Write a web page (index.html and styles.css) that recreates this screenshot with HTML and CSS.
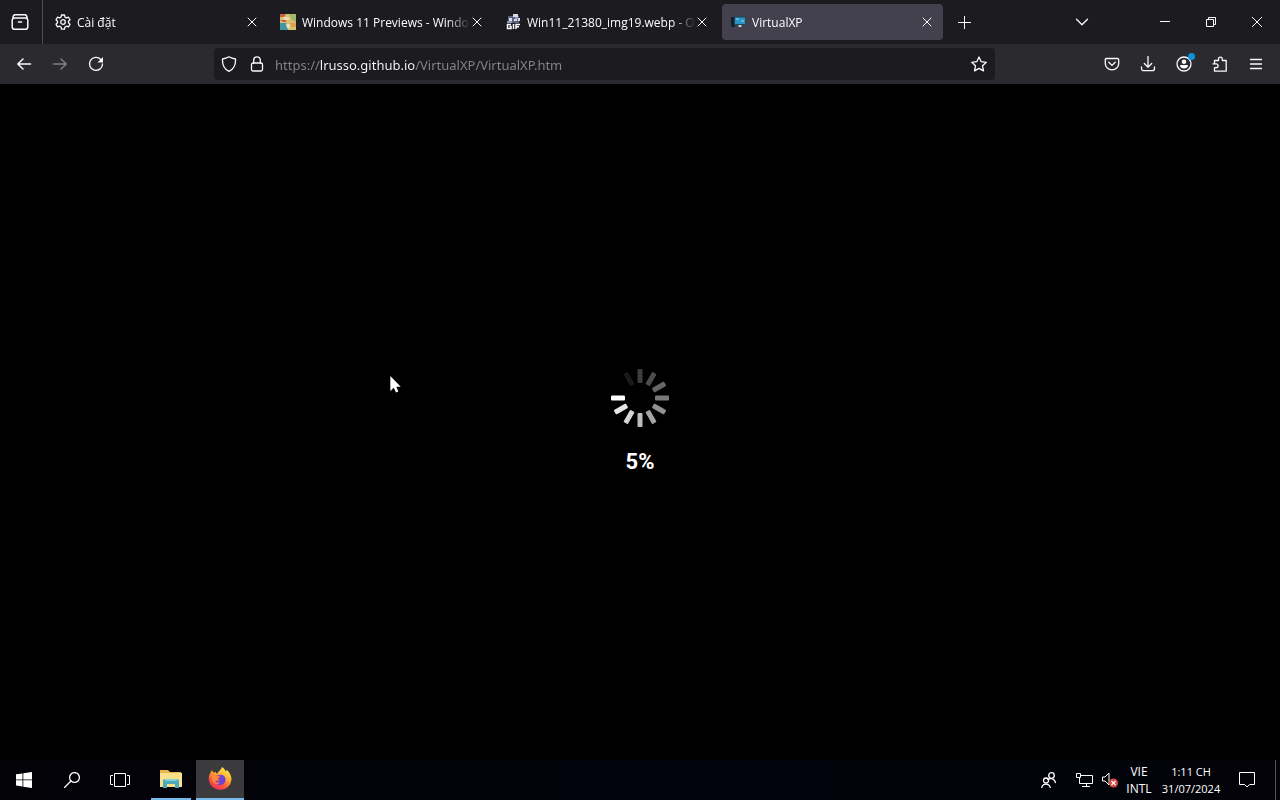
FILE: index.html
```html
<!DOCTYPE html>
<html lang="vi">
<head>
<meta charset="utf-8">
<meta name="viewport" content="width=device-width, initial-scale=1">
<title>VirtualXP</title>
<link rel="stylesheet" href="styles.css">
</head>
<body>
<header class="browser">
  <div class="tab-strip">
    <button class="view-button" aria-label="Firefox View">
      <svg class="icon" width="18" height="18" viewBox="0 0 18 18"><path d="M4 1.800h10M3.500 5h11a2.300 2.300 0 0 1 2.300 2.300v6.400a2.600 2.600 0 0 1-2.600 2.600H3.800a2.600 2.600 0 0 1-2.600-2.600V7.300A2.300 2.300 0 0 1 3.500 5zM1.800 5.400C2 3.500 2.500 1.800 4 1.800M16.200 5.400C16 3.500 15.500 1.800 14 1.800M7.500 9h3"/></svg>
    </button>
    <nav class="tabs" aria-label="Tabs">
      <div class="tab">
        <svg class="icon thin" width="16" height="16" viewBox="0 0 16 16"><path d="M6.500 1h3l.5 2.100 1.400.8 2.100-.7 1.500 2.600-1.500 1.500v1.500L15 10.300l-1.500 2.600-2.100-.7-1.400.8-.5 2.100h-3L6 13l-1.400-.8-2.100.7L1 10.300l1.500-1.500V7.300L1 5.800l1.500-2.600 2.100.7L6 3.100z"/><circle cx="8" cy="8" r="2.300"/></svg>
        <a class="tab-title" href="#">Cài đặt</a>
        <button class="tab-close" aria-label="Close tab"><svg class="icon hair" width="10" height="10" viewBox="0 0 10 10"><path d="M1 1l8 8M9 1L1 9"/></svg></button>
      </div>
      <div class="tab">
        <svg width="16" height="16" viewBox="0 0 16 16"><path fill="#d9bf74" d="M0 0h16v16H0z"/><path fill="#c0604a" d="M0 0h6l-2 3H0zM0 6h6v2H3z"/><path fill="#9bb968" d="M9 0h7v8l-4-2z"/><path fill="#f1d8ae" d="M3 3h6v3H4z"/><path fill="#4397a0" d="M0 9h6l2 7H0z"/><path fill="#dfa055" d="M10 9h6v4h-5z"/><path fill="#e9dfb2" d="M6 10h4v4H7z"/></svg>
        <a class="tab-title" href="#">Windows 11 Previews - Windo</a>
        <button class="tab-close" aria-label="Close tab"><svg class="icon hair" width="10" height="10" viewBox="0 0 10 10"><path d="M1 1l8 8M9 1L1 9"/></svg></button>
      </div>
      <div class="tab">
        <svg width="16" height="16" viewBox="0 0 16 16"><path fill="#59617b" d="M3 2h11v7H3z"/><path fill="#d9dce8" d="M8 0h5v3H8zM4 4h3v3H4zM9 5h3v2H9zM13 4h2v3h-2z"/><path fill="#8c99be" d="M2 7h5v2H2zM10 3h3v2h-3z"/><path fill="none" stroke="#fff" stroke-width="1.500" d="M6 10.500H2.500v4H6v-2H4.500M8.500 10v5M11 15v-4.500h4M11 12.700h3"/></svg>
        <a class="tab-title" href="#">Win11_21380_img19.webp - On</a>
        <button class="tab-close" aria-label="Close tab"><svg class="icon hair" width="10" height="10" viewBox="0 0 10 10"><path d="M1 1l8 8M9 1L1 9"/></svg></button>
      </div>
      <div class="tab active">
        <svg width="16" height="16" viewBox="0 0 16 16"><path fill="#15202b" d="M1 3h4v10H1z"/><path fill="#2a93c6" stroke="#24445a" d="M4.500 3h11v7.500h-11z"/><path fill="#59b8dd" d="M6 4h3v2H6zM11 6h3v2h-3z"/><path fill="#b8d5df" d="M8.500 11h3v2h-3z"/></svg>
        <a class="tab-title" href="#">VirtualXP</a>
        <button class="tab-close" aria-label="Close tab"><svg class="icon hair" width="10" height="10" viewBox="0 0 10 10"><path d="M1 1l8 8M9 1L1 9"/></svg></button>
      </div>
    </nav>
    <button class="new-tab" aria-label="New tab"><svg class="icon crisp" width="13" height="13" viewBox="0 0 13 13"><path d="M6.500 0v13M0 6.500h13"/></svg></button>
    <button class="list-tabs" aria-label="List all tabs"><svg class="icon thin" width="14" height="8" viewBox="0 0 14 8"><path d="M1.500 1.200L7 6.700l5.500-5.500"/></svg></button>
    <div class="window-controls">
      <button aria-label="Minimize"><svg class="icon crisp" width="10" height="10" viewBox="0 0 10 10"><path d="M0 4.500h10"/></svg></button>
      <button aria-label="Restore"><svg class="icon crisp" width="10" height="10" viewBox="0 0 10 10"><path d="M.5 2.500h7v7h-7zM2.500 2.500v-2h7v7h-2"/></svg></button>
      <button aria-label="Close"><svg class="icon hair" width="10" height="10" viewBox="0 0 10 10"><path d="M0 0l10 10M10 0L0 10"/></svg></button>
    </div>
  </div>
  <div class="toolbar">
    <button aria-label="Back"><svg class="icon" width="16" height="16" viewBox="0 0 16 16"><path d="M14.500 8H1.800M7 3L1.800 8 7 13"/></svg></button>
    <button aria-label="Forward" disabled><svg class="icon" width="16" height="16" viewBox="0 0 16 16"><path d="M1.500 8h12.700M9 3l5.200 5L9 13"/></svg></button>
    <button aria-label="Reload"><svg class="icon thin" width="16" height="16" viewBox="0 0 16 16"><path d="M12.800 3.500A6.500 6.500 0 1 0 14.500 8"/><path class="solid" d="M15 1v5.500H9.500z"/></svg></button>
    <form class="url-bar">
      <svg class="icon thin" width="16" height="16" viewBox="0 0 16 16"><path d="M8 .8c2 1.200 4.300 1.900 6.500 2.200.3 5.500-1.500 10-6.500 12.300C3 13 1.200 8.500 1.500 3 3.700 2.700 6 2 8 .8z"/></svg>
      <svg class="icon thin" width="16" height="16" viewBox="0 0 16 16"><rect x="2.500" y="7" width="11" height="8" rx="1.500"/><path d="M4.700 7V4.200a3.300 3.300 0 0 1 6.600 0V7"/></svg>
      <input class="url" type="text" aria-label="Address" value="https://lrusso.github.io/VirtualXP/VirtualXP.htm">
      <button type="button" aria-label="Bookmark this page"><svg class="icon thin" width="16" height="16" viewBox="0 0 16 16"><path d="M8 1l2.200 4.700 5.100.6-3.800 3.500 1 5.100L8 12.400l-4.500 2.500 1-5.100L.7 6.300l5.100-.6z"/></svg></button>
    </form>
    <button aria-label="Save to Pocket"><svg class="icon thin" width="16" height="16" viewBox="0 0 16 16"><path d="M2.500 2.500h11q1.200 0 1.200 1.200v4a6.700 6.200 0 0 1-13.400 0v-4q0-1.200 1.200-1.200zM4.800 6.300L8 9.400l3.200-3.100"/></svg></button>
    <button aria-label="Downloads"><svg class="icon thin" width="16" height="16" viewBox="0 0 16 16"><path d="M8 .5v10.500M4.300 7.500L8 11.200l3.700-3.700M1.500 11v1.500a2.200 2.200 0 0 0 2.200 2.200h8.600a2.200 2.200 0 0 0 2.200-2.200V11"/></svg></button>
    <button class="account" aria-label="Account"><svg class="icon thin" width="16" height="16" viewBox="0 0 16 16"><circle cx="8" cy="8" r="7"/><circle class="solid" cx="8" cy="5.800" r="2.300"/><path class="solid" d="M4 9h8a4 3.500 0 0 1-8 0z"/></svg></button>
    <button aria-label="Extensions"><svg class="icon thin" width="16" height="16" viewBox="0 0 16 16"><path d="M2.500 7.500V4.500h4V3a1.900 1.900 0 0 1 3.800 0v1.500h3.900v10.700H2.500v-3.500h1.700a1.900 1.900 0 0 0 0-3.800H1"/></svg></button>
    <button aria-label="Menu"><svg class="icon thin" width="14" height="12" viewBox="0 0 14 12"><path d="M1.500 1.500h11M1.500 6h11M1.500 10.500h11"/></svg></button>
  </div>
</header>

<main class="page">
  <div class="loader">
    <svg width="60" height="60" viewBox="0 0 60 60" aria-hidden="true">
      <defs><rect id="spoke" x="1" y="27.500" width="14" height="5" rx="1"/></defs>
      <g fill="#fff">
        <use href="#spoke"/>
        <use href="#spoke" transform="rotate(-30 30 30)" opacity=".9"/>
        <use href="#spoke" transform="rotate(-60 30 30)" opacity=".84"/>
        <use href="#spoke" transform="rotate(-90 30 30)" opacity=".74"/>
        <use href="#spoke" transform="rotate(-120 30 30)" opacity=".65"/>
        <use href="#spoke" transform="rotate(-150 30 30)" opacity=".57"/>
        <use href="#spoke" transform="rotate(180 30 30)" opacity=".48"/>
        <use href="#spoke" transform="rotate(150 30 30)" opacity=".4"/>
        <use href="#spoke" transform="rotate(120 30 30)" opacity=".3"/>
        <use href="#spoke" transform="rotate(90 30 30)" opacity=".24"/>
        <use href="#spoke" transform="rotate(60 30 30)" opacity=".1"/>
      </g>
    </svg>
    <div class="percent">5%</div>
  </div>
</main>

<footer class="taskbar">
  <button class="task" aria-label="Start"><svg width="16" height="16" viewBox="0 0 16 16"><path fill="#fff" d="M0 2.300l6.500-.9v6.100H0zM7.300 1.300L16 0v7.500H7.300zM0 8.300h6.500v6.200L0 13.600zM7.300 8.300H16V16l-8.700-1.300z"/></svg></button>
  <button class="task" aria-label="Search"><svg class="icon thin" width="16" height="16" viewBox="0 0 16 16"><circle cx="10.500" cy="5.500" r="4.900"/><path d="M7 9L.5 15.500"/></svg></button>
  <button class="task" aria-label="Task view"><svg class="icon crisp" width="20" height="14" viewBox="0 0 20 14"><path d="M4.500.5h11v13h-11zM3 2.500H.5v9H3M17 2.500h2.500v9H17"/></svg></button>
  <button class="task explorer" aria-label="File Explorer"><svg width="22" height="18" viewBox="0 0 22 18"><path fill="#e8b84c" d="M0 0h8l2 2h11v5H0z"/><path fill="#f9e08d" d="M0 3h22v14H0z"/><path fill="#4ca9bc" d="M3 18v-7q0-2 2-2h12q2 0 2 2v7h-4v-4H7v4z"/><path fill="#87d0d1" d="M5 9h12v2H5z"/></svg></button>
  <button class="task running" aria-label="Firefox"><svg width="24" height="24" viewBox="0 0 24 24">
    <defs><linearGradient id="flame" x1=".8" y1="0" x2=".25" y2="1"><stop offset="0" stop-color="#fff04f"/><stop offset=".4" stop-color="#ffab32"/><stop offset=".7" stop-color="#ff5639"/><stop offset="1" stop-color="#e62865"/></linearGradient></defs>
    <path fill="url(#flame)" d="M2.600 5.400L4 3l1.200 2.600L7.600 5 9 7c1.500-3 4-3.800 5-7 2 1.200 3 2.500 3.500 4.200L19 3c2.700 2.600 4.500 5.800 4.500 9.500A11.400 11.400 0 0 1 .8 12.800C.5 10 1.400 7.400 2.600 5.400z"/>
    <path fill="#7541d5" d="M8 8.500l4-.8c3.700 0 5.700 2 5.500 5.300-.2 3.400-2.800 5-5.500 5s-5-2-5-4.500c2 .8 4 .7 5-.8-2-.5-4-.4-5.500-2z"/>
    <path fill="#ff873a" d="M4 8c1.700-1 3.500-.7 4.800.5l3.200.6c-.2 1.400-1.700 1.600-2 2.900-.4 1.400-2.300 1-2.800 2 .8 2 3.400 1.800 5 1.200-2.200 3.400-8 1.600-8.200-3.200z"/>
  </svg></button>
  <div class="tray">
    <button class="people" aria-label="People"><svg class="icon thin" width="16" height="16" viewBox="0 0 16 16"><circle cx="10.500" cy="3.500" r="2.800"/><circle cx="5" cy="8.500" r="2.500"/><path d="M.8 15.500a4.300 4.300 0 0 1 8.400 0M7 7.500c3-2 6.500-.7 7.500 3"/></svg></button>
    <button class="network" aria-label="Network"><svg class="icon crisp" width="17" height="14" viewBox="0 0 17 14"><path d="M5 2.500h11.500v8H3.500V5M.5.500h4v4h-4zM6 13.500h8M10.500 10.500v3"/></svg></button>
    <button class="volume" aria-label="Volume muted"><svg width="18" height="16" viewBox="0 0 18 16"><path fill="none" stroke="#fff" d="M1.500 5h2.500l4-4v12L4 9H1.500z"/><circle cx="12.500" cy="11" r="4.500" fill="#d94742"/><path stroke="#fff" stroke-width="1.300" d="M10.500 9l4 4M14.500 9l-4 4"/></svg></button>
    <button class="language"><span>VIE</span><span>INTL</span></button>
    <button class="clock"><span>1:11 CH</span><span>31/07/2024</span></button>
    <button class="notices" aria-label="Notifications"><svg class="icon crisp" width="16" height="16" viewBox="0 0 16 16"><path d="M.5.500h15v12H10.500L8 15l-2.500-2.500H.5z"/></svg></button>
    <button class="show-desktop" aria-label="Show desktop"></button>
  </div>
</footer>
<svg class="pointer" width="12" height="17" viewBox="0 0 12 18" aria-hidden="true"><path fill="#fff" d="M0 0v16l3.700-3.500L6 17.500l2.500-1-2.200-5H11z"/></svg>
</body>
</html>
```
FILE: styles.css
```css
* { box-sizing: border-box; }

body {
  margin: 0;
  min-height: 100vh;
  display: flex;
  flex-direction: column;
  background: #000;
  color: #fbfbfe;
  font: 12px/16px "Open Sans", "Noto Sans", sans-serif;
}

button {
  display: flex;
  align-items: center;
  justify-content: center;
  flex: none;
  margin: 0;
  padding: 0;
  border: 0;
  background: none;
  color: inherit;
  font: inherit;
}

svg { display: block; flex: none; }

.icon {
  fill: none;
  stroke: currentColor;
  stroke-width: 1.5;
  stroke-linecap: round;
  stroke-linejoin: round;
}
.icon .solid { fill: currentColor; stroke: none; }
.thin { stroke-width: 1.3; }
.hair { stroke-width: 1; }
.crisp { stroke-width: 1; stroke-linecap: butt; stroke-linejoin: miter; }

.tab-strip {
  display: flex;
  height: 44px;
  background: #1c1b20;
}
.view-button {
  width: 43px;
  padding-right: 2px;
  border-right: 1px solid #4b4a55;
}
.tabs {
  display: flex;
  flex: 0 1 900px;
  min-width: 0;
  gap: 4px;
  padding: 4px 0 4px 4px;
}
.tab {
  display: flex;
  flex: 1;
  min-width: 0;
  align-items: center;
  padding: 0 4px 0 8px;
  border-radius: 4px;
}
.active { background: #42414d; }
.tab-title {
  flex: 1;
  min-width: 0;
  margin: 0 -6px 0 6px;
  padding-top: 1px;
  overflow: hidden;
  white-space: nowrap;
  color: inherit;
  text-decoration: none;
  mask-image: linear-gradient(to left, transparent, #000 24px);
}
.tab-close { width: 24px; height: 24px; }
.new-tab { width: 42px; }
.list-tabs { width: 36px; margin-left: auto; }
.window-controls { display: flex; margin-left: 42px; }
.window-controls button { width: 46px; }

.toolbar {
  display: flex;
  align-items: center;
  height: 40px;
  padding: 0 6px;
  background: #2b2a2f;
}
.toolbar button { width: 36px; height: 32px; }
.toolbar button:disabled { opacity: .4; }
.url-bar {
  display: flex;
  flex: 1;
  min-width: 0;
  align-items: center;
  gap: 12px;
  height: 32px;
  margin: 0 99px 0 100px;
  padding-left: 7px;
  border-radius: 4px;
  background: #1c1b20;
}
.url {
  flex: 1;
  min-width: 0;
  margin-left: -2px;
  padding: 2px 0 0;
  border: 0;
  outline: 0;
  color: #85858c;
  font: 13px/20px "Noto Sans", "Open Sans", sans-serif;
  background: linear-gradient(to right, #85858c 45px, #fbfbfe 45px 140px, #85858c 140px);
  background-clip: text;
  -webkit-text-fill-color: transparent;
}
.toolbar .url-bar button { width: 32px; }
.account { position: relative; }
.account::after {
  content: "";
  position: absolute;
  top: 5px;
  right: 7px;
  width: 7px;
  height: 7px;
  border-radius: 50%;
  background: #0a93d8;
}

.page {
  display: flex;
  flex: 1;
  align-items: center;
  justify-content: center;
}
.loader {
  display: flex;
  flex-direction: column;
  align-items: center;
  gap: 20px;
}
.percent { font: bold 22px/28px Roboto, sans-serif; color: #fff; }

.taskbar {
  display: flex;
  height: 40px;
  background: linear-gradient(to right, #020207, #02030c 55%, #030309);
  color: #fff;
}
.task { width: 48px; }
.explorer {
  width: 40px;
  margin: 0 5px 0 7px;
  border-bottom: 2px solid #76b9ed;
}
.running { background: #3b3b3d; border-bottom: 2px solid #76b9ed; }
.tray { display: flex; margin-left: auto; }
.people { width: 34px; }
.network { width: 36px; }
.volume { width: 16px; }
.language { width: 40px; padding-left: 2px; flex-direction: column; }
.clock { width: 66px; flex-direction: column; font-size: 11px; }
.language, .clock { line-height: 17px; }
.notices { width: 45px; }
.show-desktop { width: 5px; margin-left: 6px; border-left: 1px solid #55555b; }

.pointer { position: absolute; left: 390px; top: 376px; }
```
